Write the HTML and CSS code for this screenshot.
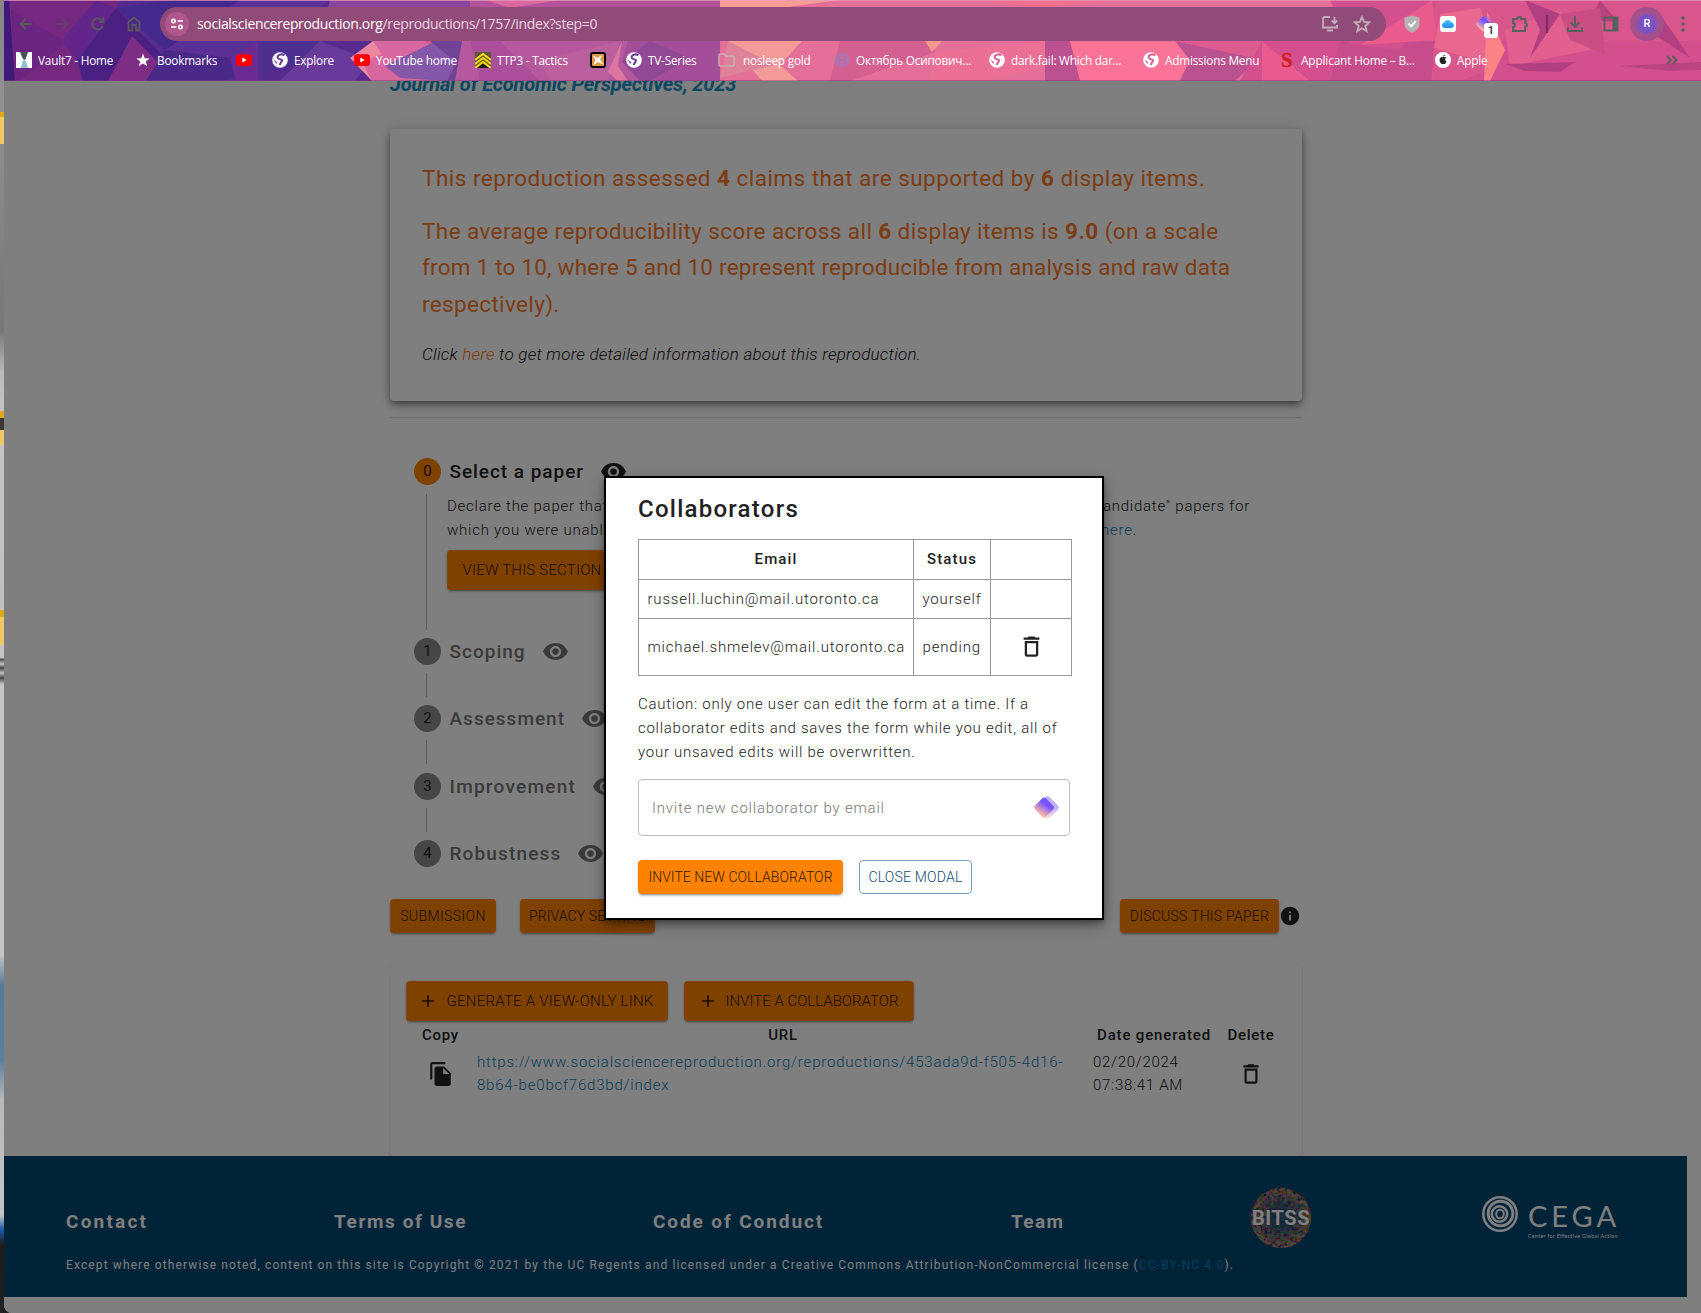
FILE: index.html
```html
<!DOCTYPE html>
<html lang="en">
<head>
<meta charset="utf-8">
<title>Reproduction</title>
<link rel="stylesheet" href="styles.css">
</head>
<body>
<svg class="defs" width="0" height="0">
  <defs>
    <linearGradient id="gem" x1="0.3" y1="0" x2="0.5" y2="1"><stop offset="0.3" stop-color="#7a55ff"/><stop offset="1" stop-color="#fdb9a0"/></linearGradient>
    <linearGradient id="sky" x1="0" y1="0" x2="0" y2="1"><stop offset="0" stop-color="#4cc6fb"/><stop offset="1" stop-color="#1d8cf2"/></linearGradient>
  </defs>
  <symbol id="eye" viewBox="0 0 24 24"><path d="M12 4.5C7 4.5 2.73 7.61 1 12c1.73 4.39 6 7.5 11 7.5s9.27-3.11 11-7.5c-1.73-4.39-6-7.5-11-7.5zM12 17c-2.76 0-5-2.24-5-5s2.24-5 5-5 5 2.24 5 5-2.24 5-5 5zm0-8c-1.66 0-3 1.34-3 3s1.34 3 3 3 3-1.34 3-3-1.34-3-3-3z"/></symbol>
  <symbol id="trash" viewBox="0 0 24 24"><path d="M6 19c0 1.1.9 2 2 2h8c1.1 0 2-.9 2-2V7H6v12zM8 9h8v10H8V9zm7.500-5l-1-1h-5l-1 1H5v2h14V4z"/></symbol>
  <symbol id="plus" viewBox="0 0 24 24"><path d="M19 13h-6v6h-2v-6H5v-2h6V5h2v6h6v2z"/></symbol>
  <symbol id="globe" viewBox="0 0 16 16"><circle cx="8" cy="8" r="7.800" fill="#fff"/><path d="M12.500 3.200C10 1.600 5.500 2.500 5.600 5.300c.1 1.700 1.700 1.900 3 2.100 1.500.3 1.900 1.200 1 2.300-.9 1-1.800 1.500-1.600 3.300" fill="none" stroke="currentColor" stroke-width="2"/><path d="M1.500 7.500l4 3.200-1.500 1z" fill="currentColor"/></symbol>
  <symbol id="tube" viewBox="0 0 16 16"><rect y="2.300" width="16" height="11.600" rx="3" fill="#f00"/><path d="M6.300 5.400v5.200L10.700 8z" fill="#fff"/></symbol>
  <symbol id="diamond" viewBox="0 0 26 26"><rect x="5.500" y="4.500" width="17" height="17" rx="3.500" transform="rotate(45 14 13)" fill="url(#gem)" opacity="0.45"/><rect x="3.200" y="5.500" width="15" height="15" rx="2.500" transform="rotate(45 10.700 13)" fill="url(#gem)"/></symbol>
</svg>

<div class="desktop">
<div class="window">
  <header class="chrome">
    <svg class="chrome-art" viewBox="4 0 1697 81" preserveAspectRatio="none">
      <rect x="0" width="1701" height="81" fill="#d9568c"/>
      <path d="M0 0H420V81H0z" fill="#562b8d"/>
      <path d="M0 0H11L15 81H0z" fill="#3f1a78"/>
      <path d="M9 0H120L116 8 76 60 83 81H15z" fill="#74287f"/>
      <path d="M11 10L66 42 20 81H15z" fill="#6b2580"/>
      <path d="M116 8L165 58 146 81H83L78 60z" fill="#4a2183"/>
      <path d="M96 0L116 8 76 60 62 40z" fill="#62258a"/>
      <path d="M132 36L160 64 146 81H108z" fill="#7d2d84"/>
      <path d="M116 8L170 0H240L165 50z" fill="#45288c"/>
      <path d="M240 0H330L250 60 165 50z" fill="#5a3096"/>
      <path d="M165 50L258 62 225 81H146z" fill="#4a2888"/>
      <path d="M230 58L258 41V81H236z" fill="#6a2c92"/>
      <path d="M258 41H320L300 64 258 74z" fill="#4c2f8e"/>
      <path d="M320 41L370 60 355 81H280z" fill="#683a99"/>
      <path d="M330 0H470V41H320z" fill="#8a459b"/>
      <path d="M355 58L373 41H425L455 62 447 81H372z" fill="#d7679f"/>
      <path d="M350 58L373 41 382 54 362 62 372 81z" fill="#ed86a0"/>
      <path d="M385 66L436 41 456 62 447 81 400 78z" fill="#8457a9"/>
      <path d="M430 41H470L462 81H447L456 62z" fill="#704397"/>
      <path d="M462 41H640V81H455z" fill="#b4599e"/>
      <path d="M470 0H720V41H470z" fill="#b4529c"/>
      <path d="M485 0H560L510 8z" fill="#d9689e"/>
      <path d="M470 41H500L540 81H480z" fill="#ab4f9a"/>
      <path d="M540 60L620 41 608 81H550z" fill="#ba609f"/>
      <path d="M622 41L608 72 618 81H628L618 66z" fill="#dc76a0"/>
      <path d="M628 41H722V81H640L622 60z" fill="#a44d98"/>
      <path d="M650 41L690 58 650 81H640L622 62z" fill="#924995"/>
      <path d="M720 0H1400V81H720z" fill="#e46f99"/>
      <path d="M720 0H840L780 8H720z" fill="#f89c98"/>
      <path d="M728 41H802L780 65 798 81H762z" fill="#f49b99"/>
      <path d="M728 41L775 65 720 78z" fill="#dd8299"/>
      <path d="M840 41H930L935 52 850 81H830z" fill="#d3608f"/>
      <path d="M925 41H942L932 52z" fill="#f49991"/>
      <path d="M935 52L1045 41V66L990 81H930z" fill="#ec7096"/>
      <path d="M980 0H1120L1040 8z" fill="#f0718f"/>
      <path d="M1045 41H1070L1090 81H1045z" fill="#bb518e"/>
      <path d="M1070 41H1180L1190 60 1178 81H1080z" fill="#fb7396"/>
      <path d="M1175 41L1260 58 1235 81H1180L1190 60z" fill="#b9528f"/>
      <path d="M1175 41H1265L1262 60z" fill="#dc5c90"/>
      <path d="M1262 41H1701V81H1240z" fill="#d34f8e"/>
      <path d="M1262 41L1310 81H1262z" fill="#e95b8f"/>
      <path d="M1340 41H1440L1430 81H1330z" fill="#c64c8c"/>
      <path d="M1330 0H1440L1400 50 1350 44z" fill="#d2508e"/>
      <path d="M1360 45L1432 0 1437 40z" fill="#e85b8c"/>
      <path d="M1440 14L1480 8 1500 60 1460 81H1432L1434 48z" fill="#e9688f"/>
      <path d="M1434 48L1500 66 1460 81H1432z" fill="#d9568c"/>
      <path d="M1487 12L1505 50 1490 81H1484z" fill="#fb8388"/>
      <path d="M1505 30L1560 10 1590 50 1510 66z" fill="#e26090"/>
      <path d="M1525 0L1560 14 1530 58 1540 30z" fill="#b33f83"/>
      <path d="M1600 0L1618 22 1590 20z" fill="#b74280"/>
      <path d="M1560 14L1600 8 1605 54 1570 40z" fill="#c94e84"/>
      <path d="M1505 64L1575 62 1560 72 1525 71z" fill="#b33f83"/>
      <path d="M1642 10L1660 14 1690 58 1655 35z" fill="#b33f83"/>
      <path d="M1620 66L1701 62V70L1670 71z" fill="#b94482"/>
      <rect x="0" width="1701" height="1" fill="#e8a0bd" opacity="0.7"/>
      <rect x="0" y="80" width="1701" height="1" fill="#7c4272" opacity="0.5"/>
    </svg>
    <div class="toolbar">
      <nav class="nav-icons">
        <svg width="16" height="16" viewBox="0 0 16 16"><path d="M14 8H3M8 2.500L2.500 8 8 13.500"/></svg>
        <svg class="faint" width="16" height="16" viewBox="0 0 16 16"><path d="M2 8h11M8 2.500L13.500 8 8 13.500"/></svg>
        <svg width="16" height="16" viewBox="0 0 16 16"><path d="M13 10A5.500 5.500 0 1 1 12 4.200M13.300 1.500V6H9"/></svg>
        <svg width="16" height="16" viewBox="0 0 16 16"><path d="M2.500 14.500V6L8 1.700 13.500 6v8.500H9.800V9H6.200v5.500z"/></svg>
      </nav>
      <div class="omnibox">
        <span class="site-chip"><svg width="14" height="14" viewBox="0 0 14 14"><path d="M7.500 4H13M1 10h5.500"/><circle cx="3.500" cy="4" r="1.700"/><circle cx="10.500" cy="10" r="1.700"/></svg></span>
        <span class="url">socialsciencereproduction.org<span class="url-path">/reproductions/1757/index?step=0</span></span>
        <svg class="omni-icon" width="18" height="18" viewBox="0 0 18 18"><path d="M9 2H3.500Q2 2 2 3.500v9h14V10M6 15.500h6M13.500 2v6M10.800 5.500l2.700 2.700 2.700-2.700"/></svg>
        <svg class="omni-icon" width="18" height="18" viewBox="0 0 18 18"><path d="M9 2l2.100 4.900 5.200.4-4 3.500 1.300 5.200L9 13.200 4.400 16l1.300-5.200-4-3.500 5.200-.4z"/></svg>
      </div>
      <div class="extensions">
        <svg width="18" height="18" viewBox="0 0 18 18"><path d="M9 .5l7.500 2.300v6C16.500 13 13 16 9 17.700 5 16 1.500 13 1.500 8.800v-6z" fill="#b4b4b4"/><path d="M5.500 8.500l2.700 2.700 4.500-5" fill="none" stroke="#fff" stroke-width="2"/></svg>
        <svg width="18" height="18" viewBox="0 0 18 18"><rect x="1" y="1" width="16" height="16" rx="3" fill="#fff"/><path d="M5.500 13a2.800 2.800 0 0 1-.5-5.500 4 4 0 0 1 7.300-.3A3 3 0 0 1 13 13z" fill="url(#sky)"/></svg>
        <span class="badge-wrap"><svg width="20" height="20"><use href="#diamond"/></svg><b class="badge">1</b></span>
        <svg class="line" width="18" height="18" viewBox="0 0 18 18"><path d="M2 4h4.200a2 2 0 0 1 4 0h4v4.200a1.800 1.800 0 0 1 0 3.600V16H2v-3.700a2 2 0 0 0 0-4z"/></svg>
        <i class="divider"></i>
        <svg class="line" width="18" height="18" viewBox="0 0 18 18"><path d="M9 1v10.500M4.500 7.300L9 11.800l4.500-4.500M2 12.500V16h14v-3.500"/></svg>
        <svg class="line" width="18" height="18" viewBox="0 0 18 18"><path d="M2.500 2.500h13v13h-13z"/><path d="M10.500 3v12h5V3z" fill="#57605c" stroke="none"/></svg>
        <span class="avatar"><b>R</b></span>
        <svg width="6" height="18" viewBox="0 0 6 18" fill="#57605c"><circle cx="3" cy="3" r="1.700"/><circle cx="3" cy="9" r="1.700"/><circle cx="3" cy="15" r="1.700"/></svg>
      </div>
    </div>
    <div class="bookmarks">
      <span class="bm"><svg width="16" height="16" viewBox="0 0 16 16"><path fill="#fff" d="M0 0h16v16H0z"/><path fill="#44525a" d="M4 0h8l-2 6-1 2-2-1z"/><path fill="#8fc1ca" d="M7 8l3 1 2 7H5z"/></svg>Vault7 - Home</span>
      <span class="bm"><svg width="16" height="16" viewBox="0 0 16 16"><path fill="#fff" d="M8 1.500l1.700 4.700 5 .2-3.900 3.100 1.400 4.800L8 11.500l-4.200 2.800 1.400-4.800L1.300 6.400l5-.2z"/></svg>Bookmarks</span>
      <span class="bm"><svg width="16" height="16"><use href="#tube"/></svg></span>
      <span class="bm on-violet"><svg width="16" height="16"><use href="#globe"/></svg>Explore</span>
      <span class="bm"><svg width="16" height="16"><use href="#tube"/></svg>YouTube home</span>
      <span class="bm"><svg width="16" height="16" viewBox="0 0 16 16"><path fill="#5d5640" d="M0 0h16v16H0z"/><path fill="#1d1a16" d="M2 16l6-5 6 5z"/><path d="M0 8l8-6 8 6M0 12l8-6 8 6M0 16l8-6 8 6" fill="none" stroke="#ffdc00" stroke-width="2"/></svg>TTP3 - Tactics</span>
      <span class="bm"><svg width="16" height="16" viewBox="0 0 16 16"><rect x="1" y="1" width="14" height="14" rx="2" fill="#e09a4a" stroke="#000" stroke-width="2"/><path d="M3 3.500l4.500 2.500L12 3l-2 4.500 3.500 5L8 10l-4.500 3 2-5z" fill="#fff"/></svg></span>
      <span class="bm on-violet"><svg width="16" height="16"><use href="#globe"/></svg>TV-Series</span>
      <span class="bm folder"><svg width="17" height="16" viewBox="0 0 17 16"><path d="M1 13V3q0-1 1-1h4l2 2h7q1 0 1 1v8q0 1-1 1H2q-1 0-1-1z" fill="none" stroke="#c9b0b3" stroke-width="1.600"/></svg>nosleep gold</span>
      <span class="bm"><svg width="16" height="16" viewBox="0 0 16 16"><g fill="none" stroke="#9a7fc2" stroke-width="1"><circle cx="8" cy="8" r="7"/><circle cx="8" cy="8" r="4.800"/><circle cx="8" cy="8" r="2.600"/><path d="M8 1v14M3 13V5M13 13V5"/></g></svg>Октябрь Осипович...</span>
      <span class="bm on-pink"><svg width="16" height="16"><use href="#globe"/></svg>dark.fail: Which dar...</span>
      <span class="bm on-pink"><svg width="16" height="16"><use href="#globe"/></svg>Admissions Menu</span>
      <span class="bm wide"><b class="s-logo">S</b>Applicant Home – B...</span>
      <span class="bm"><svg width="16" height="16" viewBox="0 0 16 16"><circle cx="8" cy="8" r="8" fill="#fff"/><path d="M8 5.300c1.300-.7 2.500-.4 3.200.5-1.600 1-1.300 3 .3 3.700-.8 2-1.700 3-3.300 2.400C6.500 12.500 5 11 4.600 9 4.200 6.500 5.800 4.500 8 5.300zM8 4.800q0-2 2-2.300 0 2-2 2.300z" fill="#222"/></svg>Apple</span>
      <svg class="more" width="12" height="10" viewBox="0 0 12 10"><path d="M1 1l4 4-4 4M6.500 1l4 4-4 4"/></svg>
    </div>
  </header>

  <div class="viewport">
    <main class="column">
      <div class="journal">Journal of Economic Perspectives, 2023</div>
      <section class="summary">
        <p class="lead"><span class="l1">This reproduction assessed <b>4</b> claims that are supported by <b>6</b> display items.</span></p>
        <p class="lead"><span class="l2">The average reproducibility score across all <b>6</b> display items is <b>9.0</b> (on a scale</span><span class="l3">from 1 to 10, where 5 and 10 represent reproducible from analysis and raw data</span><span class="l4">respectively).</span></p>
        <p class="more-info">Click <a>here</a> to get more detailed information about this reproduction.</p>
      </section>
      <hr>
      <section class="steps">
        <div class="step active"><i>0</i><span>Select a paper</span><svg width="27" height="27"><use href="#eye"/></svg></div>
        <div class="step-body first">
          <p class="desc"><span>Declare the paper that you</span><span>"candidate" papers for</span></p>
          <p class="desc short"><span>which you were unable to</span><span><a>here</a>.</span></p>
          <button class="btn large view">VIEW THIS SECTION</button>
        </div>
        <div class="step"><i>1</i><span>Scoping</span><svg width="27" height="27"><use href="#eye"/></svg></div>
        <div class="step-body"></div>
        <div class="step"><i>2</i><span>Assessment</span><svg width="27" height="27"><use href="#eye"/></svg></div>
        <div class="step-body"></div>
        <div class="step improvement"><i>3</i><span>Improvement</span><svg width="27" height="27"><use href="#eye"/></svg></div>
        <div class="step-body"></div>
        <div class="step robustness"><i>4</i><span>Robustness</span><svg width="27" height="27"><use href="#eye"/></svg></div>
      </section>
      <div class="actions">
        <button class="btn submission">SUBMISSION</button>
        <button class="btn privacy">PRIVACY SETTING</button>
        <button class="btn discuss">DISCUSS THIS PAPER</button>
        <svg width="22" height="22" viewBox="0 0 24 24"><path d="M12 2C6.480 2 2 6.480 2 12s4.480 10 10 10 10-4.480 10-10S17.520 2 12 2zm1 15h-2v-6h2v6zm0-8h-2V7h2v2z"/></svg>
      </div>
      <section class="links">
        <div class="links-buttons">
          <button class="btn large generate"><svg width="20" height="20"><use href="#plus"/></svg>GENERATE A VIEW-ONLY LINK</button>
          <button class="btn large invite"><svg width="20" height="20"><use href="#plus"/></svg>INVITE A COLLABORATOR</button>
        </div>
        <div class="links-grid head"><b>Copy</b><b class="url-head">URL</b><b class="date-head">Date generated</b><b>Delete</b></div>
        <div class="links-grid">
          <svg width="26" height="26" viewBox="0 0 24 24"><path d="M16 1H4c-1.100 0-2 .9-2 2v14h2V3h12V1zm-1 4l6 6v10c0 1.100-.9 2-2 2H7.990C6.890 23 6 22.100 6 21l.01-14c0-1.100.89-2 1.990-2h7zm-1 7h5.500L14 6.500V12z"/></svg>
          <a>https://www.socialsciencereproduction.org/reproductions/453ada9d-f505-4d16-<br>8b64-be0bcf76d3bd/index</a>
          <span class="date">02/20/2024<br>07:38:41 AM</span>
          <svg width="26" height="26"><use href="#trash"/></svg>
        </div>
      </section>
    </main>
    <footer class="footer">
      <div class="footer-row">
        <b class="f1">Contact</b><b class="f2">Terms of Use</b><b class="f3">Code of Conduct</b><b class="f4">Team</b>
        <span class="bitss"><svg viewBox="0 0 60 60"><filter id="noise" x="0" y="0" width="100%" height="100%"><feTurbulence type="fractalNoise" baseFrequency="0.3" numOctaves="2" seed="4"/><feColorMatrix values="2.600 0 0 0 -0.800  0 1.400 0 0 -0.450  0 0 1.200 0 -0.400  0 0 0 0 0.750"/><feComposite in2="SourceGraphic" operator="in"/></filter><radialGradient id="core"><stop offset="0.3" stop-color="#004671" stop-opacity="0.7"/><stop offset="1" stop-color="#004671" stop-opacity="0.1"/></radialGradient><circle cx="30" cy="30" r="30" fill="#7b4a3c"/><circle cx="30" cy="30" r="30" filter="url(#noise)"/><circle cx="30" cy="30" r="30" fill="url(#core)"/></svg><b>BITSS</b></span>
        <span class="cega"><svg width="36" height="36" viewBox="0 0 36 36"><g fill="none" stroke="#fff"><circle cx="18" cy="18" r="16.700" stroke-width="2.500"/><circle cx="18.500" cy="17.500" r="12.300" stroke-width="3"/><circle cx="17.500" cy="18" r="7.700" stroke-width="2.600"/><ellipse cx="18" cy="18" rx="3.800" ry="4.300" stroke-width="2"/></g></svg><span><b>CEGA</b><small>Center for Effective Global Action</small></span></span>
      </div>
      <p class="copyright">Except where otherwise noted, content on this site is Copyright © 2021 by the UC Regents and licensed under a Creative Commons Attribution-NonCommercial license (<a>CC-BY-NC 4.0</a>).</p>
    </footer>
    <div class="backdrop"></div>
    <div class="modal">
      <h2>Collaborators</h2>
      <table>
        <colgroup><col class="c1"><col class="c2"><col class="c3"></colgroup>
        <tr><th>Email</th><th>Status</th><th></th></tr>
        <tr class="r2"><td>russell.luchin@mail.utoronto.ca</td><td>yourself</td><td></td></tr>
        <tr class="r3"><td>michael.shmelev@mail.utoronto.ca</td><td>pending</td><td class="del"><svg width="27" height="27"><use href="#trash"/></svg></td></tr>
      </table>
      <p class="caution">Caution: only one user can edit the form at a time. If a<br>collaborator edits and saves the form while you edit, all of<br>your unsaved edits will be overwritten.</p>
      <div class="field"><span>Invite new collaborator by email</span><svg width="27" height="27"><use href="#diamond"/></svg></div>
      <div class="modal-buttons"><button class="btn invite-new">INVITE NEW COLLABORATOR</button><button class="btn outline">CLOSE MODAL</button></div>
    </div>
  </div>
</div>
</div>
</body>
</html>
```
FILE: styles.css
```css
* { box-sizing: border-box; }
body { margin: 0; font-family: Roboto, sans-serif; color: #222; }
p, h2 { margin: 0; }
svg { display: block; flex: none; }
.defs { position: absolute; }

.desktop {
  width: 1701px; height: 1313px; padding-left: 4px; overflow: hidden;
  background: linear-gradient(#85858a 0, #929292 112px, #e0a91c 112px, #e0a91c 117px, #efc766 117px, #efc766 144px, #8d8d88 144px, #77767a 330px, #bbb 372px, #c4c4c4 411px, #e0a91c 411px, #e0a91c 418px, #3c3a34 418px, #3c3a34 430px, #efc766 430px, #efc766 445px, #c4c4c4 445px, #c0c0c0 610px, #e0a91c 610px, #e0a91c 617px, #efc766 617px, #efc766 645px, #c4c4c4 645px, #c4c4c4 658px, #444 659px, #c4c4c4 664px, #444 668px, #c4c4c4 673px, #444 678px, #c4c4c4 684px, #c4c4c4 955px, #57799a 985px, #5c7ea0 1060px, #b9b9b9 1100px, #c4c4c4 1215px, #155aa8 1230px, #211a16 1245px, #222 1313px);
}
.window {
  height: 1313px; display: flex; flex-direction: column;
  background: #222; overflow: hidden; border-bottom-left-radius: 8px;
}

/* browser chrome */
.chrome { position: relative; display: flow-root; height: 81px; flex: none; font-family: "Open Sans", sans-serif; color: #fff; }
.chrome-art { position: absolute; inset: 0; width: 100%; height: 100%; }
.toolbar { position: relative; display: flex; align-items: center; height: 34px; margin-top: 7px; }
.nav-icons { display: flex; flex: none; gap: 20px; width: 156px; padding-left: 14px; }
.nav-icons svg { fill: none; stroke: #59595c; stroke-width: 1.800; }
.nav-icons .faint { opacity: .45; }
.omnibox {
  display: flex; align-items: center; width: 1226px; height: 34px; padding: 0 15px 0 5px;
  border-radius: 17px; background: #914b79; flex: none;
}
.site-chip { display: grid; place-items: center; width: 24px; height: 24px; border-radius: 12px; background: #b0568f; }
.site-chip svg { fill: none; stroke: #fff; stroke-width: 1.600; }
.url { flex: 1; margin-left: 8px; font-size: 14px; letter-spacing: -.35px; line-height: 20px; }
.url-path { color: #ead3e2; }
.omni-icon { fill: none; stroke: #c5adb9; stroke-width: 1.800; margin-left: 14px; }
.extensions { display: flex; flex: none; align-items: center; padding-left: 17px; }
.extensions > * { margin-right: 18px; }
.extensions .line { fill: none; stroke: #57605c; stroke-width: 2; }
.badge-wrap { position: relative; }
.extensions .badge-wrap { margin-right: 16px; }
.badge {
  position: absolute; left: 9px; top: 9px; width: 14px; height: 15px; border-radius: 3px;
  background: #fff; color: #222; font: 500 11px/15px Roboto, sans-serif; text-align: center;
}
.divider { width: 2px; height: 18px; background: #7d2d58; }
.extensions .divider { margin: 0 18px 0 -1px; }
.avatar { display: grid; place-items: center; width: 34px; height: 34px; border-radius: 17px; background: #a4508f; }
.extensions .avatar { margin: 0 16px 0 -8px; }
.avatar b {
  width: 20px; height: 20px; border-radius: 10px; background: #7a52c4;
  font: 500 11px/20px Roboto, sans-serif; text-align: center;
}
.bookmarks {
  position: relative; display: grid; align-items: center; height: 24px; margin-top: 7px; padding-left: 12px;
  grid-template-columns: 119px 101px 36px 82px 121px 115px 36px 92px 116px 155px 154px 136px 156px 231px 20px;
}
.bm { display: flex; align-items: center; gap: 6px; font-size: 11.800px; letter-spacing: -.22px; white-space: nowrap; }
.bm.folder { gap: 8px; }
.bm.wide { letter-spacing: -.14px; gap: 6px; }
.on-violet svg { color: #6b3a96; }
.on-pink svg { color: #d9608f; }
.s-logo { width: 16px; padding-left: 2px; color: #d01f1f; font: 700 21px/16px "Liberation Serif", serif; -webkit-text-stroke: .4px #d01f1f; }
.more { fill: none; stroke: #57605c; stroke-width: 1.900; }

/* page */
.viewport { position: relative; display: flow-root; flex: 1; overflow: hidden; background: #fff; }
.column { width: 912px; margin-left: 386px; }
.journal {
  margin-top: -9px; height: 24px; color: #0b8cc0;
  font: italic 700 20px/24px Roboto, sans-serif; letter-spacing: -.15px; white-space: nowrap;
}
.summary {
  margin-top: 33px; height: 272px; padding: 31px 32px 32px; border-radius: 4px;
  box-shadow: 0 3px 5px -1px rgba(0,0,0,.3), 0 5px 8px rgba(0,0,0,.22), 0 1px 14px rgba(0,0,0,.2);
}
.lead { margin-bottom: 16.500px; color: #f8792a; font-size: 22.500px; line-height: 36.400px; white-space: nowrap; }
.lead span { display: block; }
.lead .l1 { letter-spacing: .48px; }
.lead .l2 { letter-spacing: .41px; }
.lead .l3 { letter-spacing: .22px; }
.lead .l4 { letter-spacing: .35px; }
.more-info { margin-top: 20px; font: italic 300 17px/24px Roboto, sans-serif; letter-spacing: .24px; color: #111; }
.more-info a { color: #f8761a; }
hr { height: 1px; margin: 16px 0 0; border: 0; background: #dcdcdc; }
.steps { margin-top: 40px; }
.step { display: flex; align-items: center; height: 27px; padding-left: 24px; color: #757575; }
.step i {
  width: 27px; height: 27px; border-radius: 50%; background: #8c8c8c; color: #1a1a1a;
  font: 400 15px/27px Roboto, sans-serif; text-align: center;
}
.step span { margin: 0 16px 0 8.500px; font-size: 19px; font-weight: 500; letter-spacing: 1px; line-height: 27px; }
.improvement span { letter-spacing: 1.250px; }
.robustness span { letter-spacing: 1.150px; }
.step svg { fill: #757575; }
.active { color: #222; }
.step.active i { background: #ff8200; }
.step.active span { letter-spacing: .95px; margin-right: 16.500px; }
.step.active svg { fill: #222; }
.step-body { height: 24px; margin: 8px 0 8.300px 36px; border-left: 1px solid #bdbdbd; }
.step-body.first { height: 136px; margin: 9px 0 8px 36px; padding-left: 20px; }
.desc { display: flex; justify-content: space-between; width: 803px; font-size: 15px; line-height: 24px; letter-spacing: .75px; color: #222; }
.desc.short { width: 690px; }
a { color: #1580b0; }

.btn {
  display: flex; align-items: center; justify-content: center; height: 34px; padding: 0; border: 0; border-radius: 4px;
  background: #ff8200; color: #331a00; font: 300 14px/20px Roboto, sans-serif; letter-spacing: .2px; white-space: nowrap;
  box-shadow: 0 3px 1px -2px rgba(0,0,0,.2), 0 2px 2px rgba(0,0,0,.14), 0 1px 5px rgba(0,0,0,.12);
}
.large { height: 40px; font-size: 15px; }
.view { width: 170px; margin-top: 8px; }
.actions { display: flex; align-items: center; margin-top: 32px; }
.submission { width: 106px; letter-spacing: .4px; }
.privacy { width: 135px; margin-left: 24px; letter-spacing: .1px; }
.discuss { width: 159px; margin-left: auto; letter-spacing: .25px; }
.actions svg { margin-right: 1px; fill: #222; }
.links {
  height: 191px; margin-top: 32px; padding: 16px; border-radius: 4px;
  box-shadow: 0 1px 3px rgba(0,0,0,.16);
}
.links-buttons { display: flex; gap: 16px; }
.links-buttons svg { margin: 0 8px 0 -2px; fill: #331a00; }
.generate { width: 262px; letter-spacing: .25px; }
.invite { width: 230px; letter-spacing: 0; }
.links-grid { display: grid; grid-template-columns: 69px 612px 134px 60px; align-items: center; font-size: 15px; line-height: 23.300px; letter-spacing: .8px; margin-top: 4px; }
.links-grid.head { margin-top: 2px; line-height: 24px; text-align: center; letter-spacing: .7px; }
.head b { font-weight: 500; }
.head .url-head { padding-left: 4px; }
.head .date-head { letter-spacing: .84px; }
.links-grid svg { justify-self: center; fill: #222; }
.links-grid a { padding-left: 2px; }
.date { padding-left: 6px; letter-spacing: .7px; }
.links-grid a, .date, .desc, td, .caution, .field { font-weight: 300; }

.footer { height: 141px; margin-right: 14px; padding: 32px 0 0 62px; background: #004671; color: #fff; }
.footer-row { display: grid; grid-template-columns: 268px 319px 358px 240px 231px 140px; height: 60px; align-items: center; font-size: 19px; line-height: 24px; }
.footer-row > b { padding-top: 8px; }
.f1 { letter-spacing: 2.200px; }
.f2 { letter-spacing: 1.600px; }
.f3 { letter-spacing: 1.900px; }
.f4 { letter-spacing: 1.350px; }
.bitss { display: grid; place-items: center; width: 60px; height: 60px; }
.bitss > * { grid-area: 1 / 1; }
.bitss svg { width: 60px; height: 60px; }
.bitss b { position: relative; font: 700 20px/24px Roboto, sans-serif; letter-spacing: .6px; }
.cega { display: flex; align-items: flex-start; gap: 10px; height: 44px; }
.cega > span { display: flex; flex-direction: column; width: 94px; }
.cega b { font: 400 29px/30px Lato, sans-serif; letter-spacing: 3.900px; margin-top: 5px; }
.cega small { font: 400 5.300px/8px Lato, sans-serif; letter-spacing: .34px; white-space: nowrap; margin-top: 1px; }
.copyright { margin-top: 7px; font-size: 12px; line-height: 20px; letter-spacing: 1.118px; white-space: nowrap; }
.copyright a { color: #0a7fb8; }

.backdrop { position: absolute; inset: 0; background: rgba(0,0,0,.5); }
.modal {
  position: absolute; left: 600px; top: 395px; width: 500px; height: 444px; padding: 15px 32px 0;
  border: 2px solid #000; background: #fff;
  box-shadow: 0 3px 5px rgba(0,0,0,.3), 0 6px 14px rgba(0,0,0,.3);
}
.modal h2 { font-size: 24px; font-weight: 500; line-height: 32px; letter-spacing: 1.250px; }
table { width: 434px; margin-top: 14px; border-collapse: collapse; table-layout: fixed; font-size: 15px; letter-spacing: .82px; color: #222; }
.c1 { width: 275px; }
.c2 { width: 77px; }
.c3 { width: 81px; }
th, td { height: 40px; padding: 0 0 0 8.500px; border: 1px solid #999; text-align: left; line-height: 22px; white-space: nowrap; }
th { padding: 0 0 2px; text-align: center; font-weight: 500; letter-spacing: 1.130px; color: #222; }
.r2 td { height: 39px; }
.r3 td { height: 57px; }
.modal table .del { padding: 0 0 2px; }
.del svg { margin: 0 auto; fill: #222; }
.caution { margin-top: 16px; font-size: 15px; line-height: 24px; letter-spacing: .735px; color: #222; white-space: nowrap; }
.field {
  display: flex; align-items: center; justify-content: space-between; width: 432px; height: 57px; margin-top: 15px; padding: 0 9px 0 13px;
  border: 1px solid #c0c0c0; border-radius: 4px; color: #777; font-size: 15px; letter-spacing: .8px;
}
.modal-buttons { display: flex; gap: 16px; margin-top: 24px; }
.invite-new { width: 205px; letter-spacing: .05px; }
.outline { width: 113px; border: 1px solid #7fa0b8; background: #fff; color: #0f4a74; box-shadow: none; }
```
